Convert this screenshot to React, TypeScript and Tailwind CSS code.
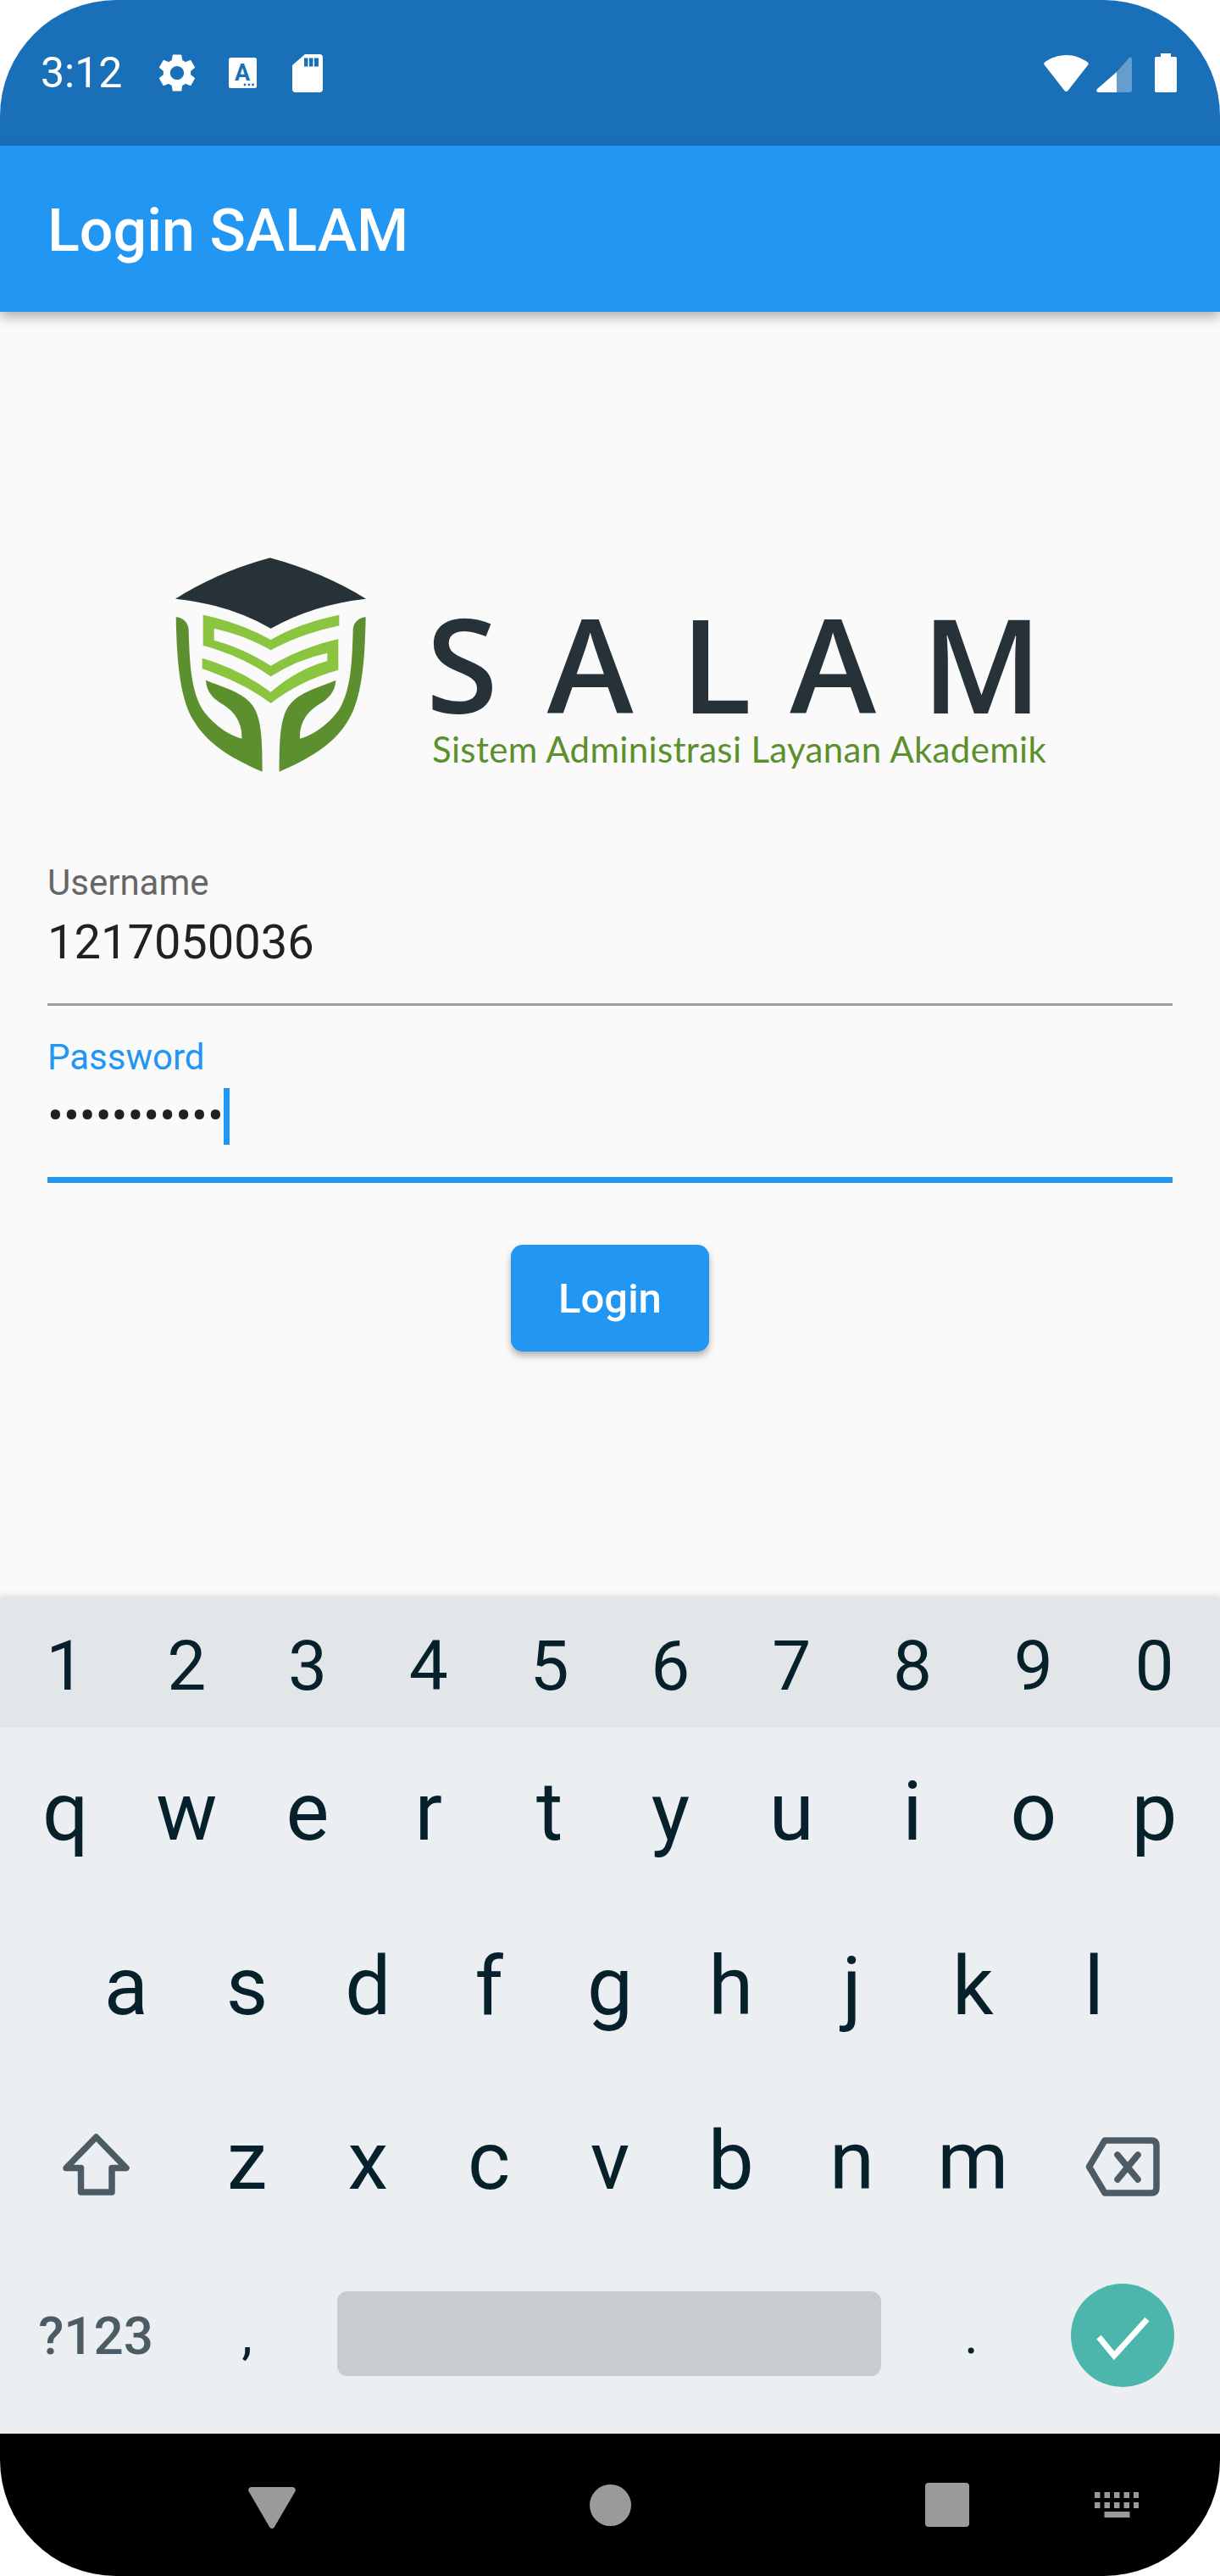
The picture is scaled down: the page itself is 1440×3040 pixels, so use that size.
const numberKeys = ["1", "2", "3", "4", "5", "6", "7", "8", "9", "0"];
const topRow = ["q", "w", "e", "r", "t", "y", "u", "i", "o", "p"];
const homeRow = ["a", "s", "d", "f", "g", "h", "j", "k", "l"];
const bottomRow = ["z", "x", "c", "v", "b", "n", "m"];

function StatusBar() {
  return (
    <div className="flex h-[172px] shrink-0 items-center bg-[#1a70b8] pl-[48px] text-white">
      <span className="w-[100px] text-[50px] leading-[56px]">3:12</span>
      <svg viewBox="0 0 24 24" className="ml-[34px] h-[54px] w-[54px]" fill="#fff">
        <path d="M19.14 12.94c.04-.3.06-.61.06-.94 0-.32-.02-.64-.07-.94l2.03-1.58c.18-.14.23-.41.12-.61l-1.92-3.32c-.12-.22-.37-.29-.59-.22l-2.39.96c-.5-.38-1.03-.7-1.62-.94l-.36-2.54c-.04-.24-.24-.41-.48-.41h-3.84c-.24 0-.43.17-.47.41l-.36 2.54c-.59.24-1.13.57-1.62.94l-2.39-.96c-.22-.08-.47 0-.59.22L2.74 8.87c-.12.21-.08.47.12.61l2.03 1.58c-.05.3-.09.63-.09.94s.02.64.07.94l-2.03 1.58c-.18.14-.23.41-.12.61l1.92 3.32c.12.22.37.29.59.22l2.39-.96c.5.38 1.03.7 1.62.94l.36 2.54c.05.24.24.41.48.41h3.84c.24 0 .44-.17.47-.41l.36-2.54c.59-.24 1.13-.56 1.62-.94l2.39.96c.22.08.47 0 .59-.22l1.92-3.32c.12-.22.07-.47-.12-.61l-2.01-1.58zM12 15.6c-1.98 0-3.6-1.62-3.6-3.6s1.62-3.6 3.6-3.6 3.6 1.62 3.6 3.6-1.62 3.6-3.6 3.6z" />
      </svg>
      <svg viewBox="0 0 33 36" className="ml-[34px] h-[36px] w-[33px]">
        <rect width="33" height="36" rx="2.5" fill="#fff" />
        <text x="16" y="27" textAnchor="middle" fontSize="27" fontWeight="700" fill="#1a70b8">A</text>
        <circle cx="19" cy="32" r="1.4" fill="#1a70b8" />
        <circle cx="24" cy="32" r="1.4" fill="#1a70b8" />
        <circle cx="28.5" cy="32" r="1.4" fill="#1a70b8" />
      </svg>
      <svg viewBox="0 0 36 45" className="ml-[42px] h-[45px] w-[36px]">
        <path d="M15 0H32Q36 0 36 4V41Q36 45 32 45H4Q0 45 0 41V13Z" fill="#fff" />
        <rect x="14" y="4.5" width="4.5" height="10" fill="#1a70b8" />
        <rect x="20" y="4.5" width="4.5" height="10" fill="#1a70b8" />
        <rect x="26" y="4.5" width="5" height="10" fill="#1a70b8" />
      </svg>
      <svg viewBox="0 0 53 43" className="ml-auto h-[43px] w-[53px]" fill="#fff">
        <path d="M26.5 0C36 0 45 3.5 52 8.5C53 9.3 53 10.5 52.3 11.5L28.5 42C27.5 43.3 25.5 43.3 24.5 42L.7 11.5C0 10.5 0 9.3 1 8.5C8 3.5 17 0 26.5 0Z" />
      </svg>
      <svg viewBox="0 0 42 42" className="ml-[9px] mt-[4px] h-[42px] w-[42px]" fill="#fff">
        <path d="M24 18L38.5 1.5Q42 -1 42 3V39Q42 42 39 42H24Z" opacity="0.32" />
        <path d="M24 18V42H3Q-1 42 1 38Z" />
      </svg>
      <svg viewBox="0 0 26 46" className="ml-[27px] mr-[51px] h-[46px] w-[26px]" fill="#fff">
        <path d="M7 0H19V4H24Q26 4 26 6V44Q26 46 24 46H2Q0 46 0 44V6Q0 4 2 4H7Z" />
      </svg>
    </div>
  );
}

function LogoMark() {
  return (
    <svg viewBox="80 55 675 757" className="h-[253px] w-[225px] shrink-0">
      <path d="M415 55Q230 105 80 200Q270 220 418 305Q570 220 755 200Q600 105 415 55Z" fill="#263238" />
      <path
        d="M660 257Q520 285 418 345Q310 285 178 257L178 365Q320 405 418 475Q510 415 618 392L618 420Q510 450 418 530Q310 450 175 410L175 448Q320 495 418 570Q520 490 657 452L657 342Q520 375 418 437Q320 375 217 347L217 305Q330 330 418 382Q520 325 660 295Z"
        fill="#8bc53f"
      />
      <g fill="#5c8f2d">
        <path d="M82 265C105 265 127 285 127 310C130 450 140 530 175 590C205 635 260 680 315 695C318 640 290 600 250 575C215 555 190 530 188 488C250 515 320 530 355 580C385 625 388 700 388 812C290 770 200 720 150 640C95 560 85 420 82 265Z" />
        <path transform="translate(836 0) scale(-1 1)" d="M82 265C105 265 127 285 127 310C130 450 140 530 175 590C205 635 260 680 315 695C318 640 290 600 250 575C215 555 190 530 188 488C250 515 320 530 355 580C385 625 388 700 388 812C290 770 200 720 150 640C95 560 85 420 82 265Z" />
      </g>
    </svg>
  );
}

function Logo() {
  return (
    <div className="ml-[151px] flex h-[253px]">
      <LogoMark />
      <div className="ml-[71px] pt-[69px]">
        <div className="h-[110px] whitespace-nowrap font-['Open_Sans',sans-serif] text-[154px] font-semibold leading-[110px] text-[#263238]">
          <span className="tracking-[58px]">S</span>
          <span className="tracking-[56px]">A</span>
          <span className="tracking-[45px]">L</span>
          <span className="tracking-[54px]">A</span>
          <span>M</span>
        </div>
        <div className="ml-[7px] mt-[27px] whitespace-nowrap font-['Lato',sans-serif] text-[42px] leading-[40px] tracking-[0.34px] text-[#5c8f2d]">
          Sistem Administrasi Layanan Akademik
        </div>
      </div>
    </div>
  );
}

function LoginForm() {
  return (
    <div className="mt-[106px]">
      <div className="h-[50px] text-[42px] leading-[50px] text-[#666666]">Username</div>
      <div className="mt-[13px] h-[64px] text-[56px] leading-[64px] text-[#212121]">1217050036</div>
      <div className="mt-[40px] h-[3px] bg-[#9e9e9e]" />

      <div className="mt-[36px] h-[50px] text-[42px] leading-[50px] text-[#2196f3]">Password</div>
      <div className="mt-[11px] flex h-[67px] items-center">
        <span className="text-[56px] leading-[67px] text-[#212121]">•••••••••••</span>
        <span className="h-[67px] w-[7px] bg-[#2196f3]" />
      </div>
      <div className="mt-[38px] h-[7px] bg-[#2196f3]" />

      <button
        type="button"
        className="mx-auto mt-[73px] block h-[126px] w-[234px] rounded-[14px] bg-[#2196f3] pt-[2px] text-[49px] font-medium text-white shadow-[0_5px_9px_rgba(0,0,0,0.3)]"
      >
        Login
      </button>
    </div>
  );
}

function LetterKey({ label }: { label: string }) {
  return <div className="flex h-[206px] w-[142.8px] items-center justify-center">{label}</div>;
}

function Keyboard() {
  return (
    <div className="relative z-10 h-[987px] shrink-0 bg-[#eceff1] text-[96px] leading-[112px] text-[#06202c] shadow-[0_-2px_8px_rgba(0,0,0,0.12)]">
      <div className="flex h-[154px] bg-[#e2e6e9] px-[6px] pt-[8px] text-[82px]">
        {numberKeys.map((key) => (
          <div key={key} className="flex w-[142.8px] items-center justify-center">
            {key}
          </div>
        ))}
      </div>
      <div className="-mt-[4px] px-[6px]">
        <div className="flex">
          {topRow.map((key) => (
            <LetterKey key={key} label={key} />
          ))}
        </div>
        <div className="flex pl-[71.4px]">
          {homeRow.map((key) => (
            <LetterKey key={key} label={key} />
          ))}
        </div>
        <div className="flex">
          <div className="flex h-[206px] w-[214.2px] items-center justify-center">
            <svg viewBox="0 0 79 75" className="mt-[7px] h-[75px] w-[79px]" fill="none" stroke="#4c5b64" strokeWidth="7.5" strokeLinejoin="round">
              <path d="M39.5 6L75 42.5H58V71H21.5V42.5H4Z" />
            </svg>
          </div>
          {bottomRow.map((key) => (
            <LetterKey key={key} label={key} />
          ))}
          <div className="flex h-[206px] w-[214.2px] items-center justify-center">
            <svg viewBox="0 0 88 70" className="mr-[3px] mt-[14px] h-[70px] w-[88px]" fill="none" stroke="#4c5b64" strokeWidth="7.5" strokeLinejoin="round" strokeLinecap="round">
              <path d="M4.5 35L23 4H78Q84 4 84 10V60Q84 66 78 66H23Z" />
              <path d="M38 21L62 50M62 21L38 50" />
            </svg>
          </div>
        </div>
        <div className="flex h-[206px] items-center text-[64px] leading-[72px]">
          <div className="w-[214.2px] pt-[2px] text-center text-[62px] font-medium text-[#4c5b64]">?123</div>
          <div className="w-[142.8px] text-center">,</div>
          <div className="mx-[35px] -mt-[4px] h-[100px] w-[642px] rounded-[12px] bg-[#c8cccf]" />
          <div className="w-[142.8px] text-center">.</div>
          <div className="flex w-[214.2px] justify-center">
            <div className="h-[122px] w-[122px] rounded-full bg-[#4db6ac]">
              <svg viewBox="0 0 122 122" className="h-[122px] w-[122px]" fill="none" stroke="#fff" strokeWidth="7">
                <path d="M33 63L51 85L90 42" />
              </svg>
            </div>
          </div>
        </div>
      </div>
    </div>
  );
}

function NavBar() {
  return (
    <div className="flex h-[168px] shrink-0 items-center bg-black pl-[293px]">
      <svg viewBox="0 0 56 49" className="mt-[7px] h-[49px] w-[56px]" fill="#9a9a9a">
        <path d="M4 0H52C55 0 56.5 2.5 55.5 5L31 47C29.8 49.5 26.2 49.5 25 47L.5 5C-.5 2.5 1 0 4 0Z" />
      </svg>
      <div className="ml-[347px] h-[49px] w-[49px] rounded-full bg-[#9a9a9a]" />
      <div className="ml-[347px] h-[52px] w-[52px] rounded-[4px] bg-[#9a9a9a]" />
      <svg viewBox="0 0 52 30" className="ml-[148px] h-[30px] w-[52px]" fill="#9a9a9a">
        {[0, 11.5, 23, 34.5, 46].map((x) => (
          <g key={x}>
            <rect x={x} y="0" width="6.5" height="7" />
            <rect x={x} y="12" width="6.5" height="7" />
          </g>
        ))}
        <rect x="11.5" y="23" width="30" height="7" />
      </svg>
    </div>
  );
}

export default function App() {
  return (
    <div className="h-[3040px] w-[1440px] bg-white font-['Roboto',sans-serif]">
      <div className="flex h-[3040px] flex-col overflow-hidden rounded-[137px] bg-[#fafafa]">
        <StatusBar />
        <header className="relative z-10 flex h-[196px] shrink-0 items-center bg-[#2196f3] pl-[56px] pt-[4px] text-[70px] font-medium text-white shadow-[0_6px_14px_rgba(0,0,0,0.3)]">
          Login SALAM
        </header>
        <main className="flex-1 px-[56px] pt-[290px]">
          <Logo />
          <LoginForm />
        </main>
        <Keyboard />
        <NavBar />
      </div>
    </div>
  );
}
